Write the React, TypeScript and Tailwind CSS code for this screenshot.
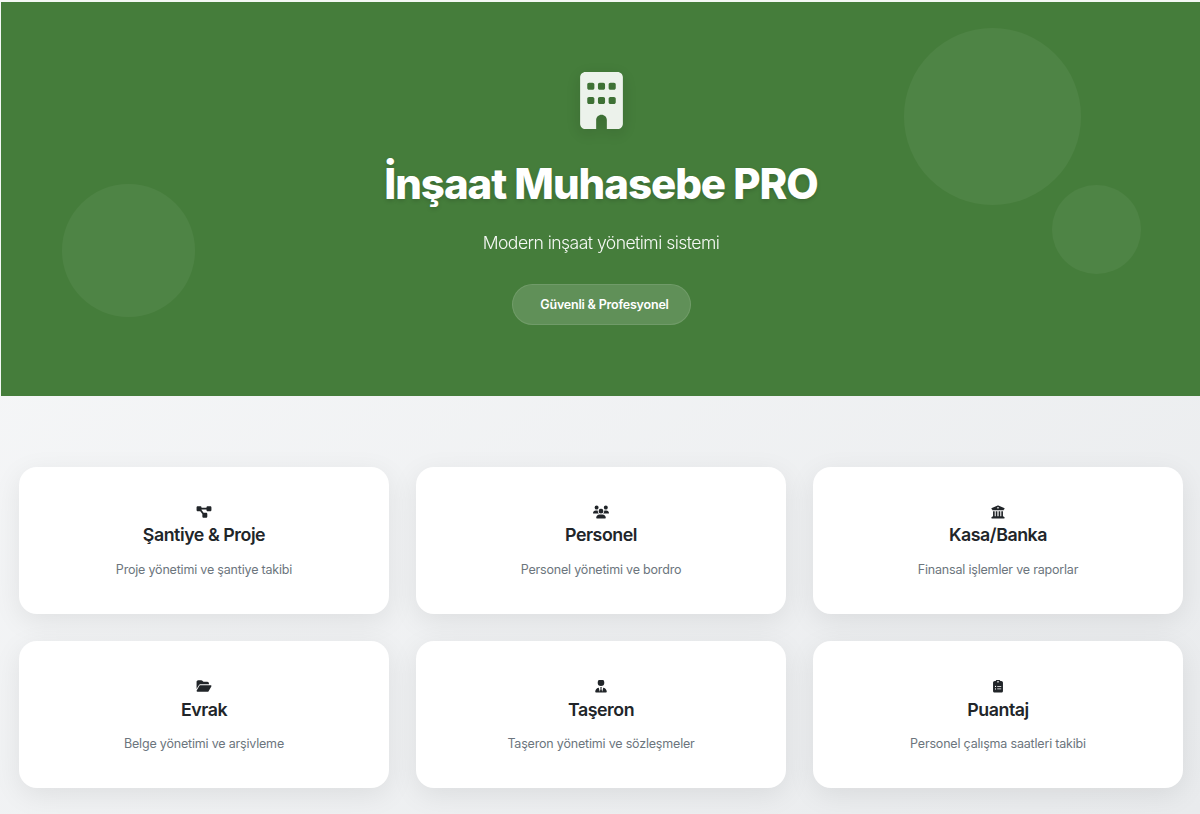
import type { ComponentType } from "react";
import { FaBuilding, FaDiagramProject, FaUsers, FaBuildingColumns, FaFolderOpen, FaUserTie, FaClipboardList } from "react-icons/fa6";

type Card = { icon: ComponentType<{ className?: string }>; title: string; text: string };

const cards: Card[] = [
  { icon: FaDiagramProject, title: "Şantiye & Proje", text: "Proje yönetimi ve şantiye takibi" },
  { icon: FaUsers, title: "Personel", text: "Personel yönetimi ve bordro" },
  { icon: FaBuildingColumns, title: "Kasa/Banka", text: "Finansal işlemler ve raporlar" },
  { icon: FaFolderOpen, title: "Evrak", text: "Belge yönetimi ve arşivleme" },
  { icon: FaUserTie, title: "Taşeron", text: "Taşeron yönetimi ve sözleşmeler" },
  { icon: FaClipboardList, title: "Puantaj", text: "Personel çalışma saatleri takibi" },
];

export default function App() {
  return (
    <div className="h-[814px] overflow-hidden bg-linear-to-br from-[#f8f9fa] to-[#e9ebed] font-['Inter',sans-serif]">
      <div className="bg-[#f4f8f4] pt-[1.5px] pl-px">
        <header className="relative flex h-[394.5px] flex-col items-center overflow-hidden bg-[#457d3b] pt-[70.5px] pl-px text-white">
          <div className="absolute top-[26px] left-[903px] size-[177px] rounded-full bg-white/5" />
          <div className="absolute top-[183px] left-[1051px] size-[89px] rounded-full bg-white/5" />
          <div className="absolute top-[182px] left-[61px] size-[133px] rounded-full bg-white/5" />
          <FaBuilding className="h-[57px] w-[43px] opacity-90 drop-shadow-[0_4px_8px_rgba(0,0,0,0.15)]" />
          <h1 className="mt-[27px] text-[42px] leading-[56px] font-extrabold tracking-[-1.04px] [text-shadow:0_2px_4px_rgba(0,0,0,0.15)]">İnşaat Muhasebe PRO</h1>
          <p className="mt-[17px] text-[17.6px] leading-[28px] font-light tracking-[-0.55px] opacity-95">Modern inşaat yönetimi sistemi</p>
          <div className="mt-[27px] flex h-[41px] w-[179px] items-center justify-center rounded-full border border-white/10 bg-white/15 pt-px pl-[7px] text-[12.5px] font-semibold tracking-[-0.2px]">Güvenli &amp; Profesyonel</div>
        </header>
      </div>
      <main className="grid grid-cols-3 gap-x-[27px] gap-y-[27.4px] pt-[71px] pr-[17px] pl-[19px]">
        {cards.map(({ icon: Icon, title, text }) => (
          <section key={title} className="flex h-[147px] flex-col items-center rounded-[18px] bg-white pt-[38px] text-[#212529] shadow-[0_7px_28px_rgba(0,0,0,0.08)]">
            <Icon className="h-[14px] w-[16px] py-[0.4px]" />
            <h2 className="mt-[5.4px] text-[17.8px] leading-[22px] font-semibold tracking-[-0.45px]">{title}</h2>
            <p className="mt-[13.4px] text-[12.5px] leading-[20px] tracking-[-0.19px] text-[#6c757d]">{text}</p>
          </section>
        ))}
      </main>
    </div>
  );
}
